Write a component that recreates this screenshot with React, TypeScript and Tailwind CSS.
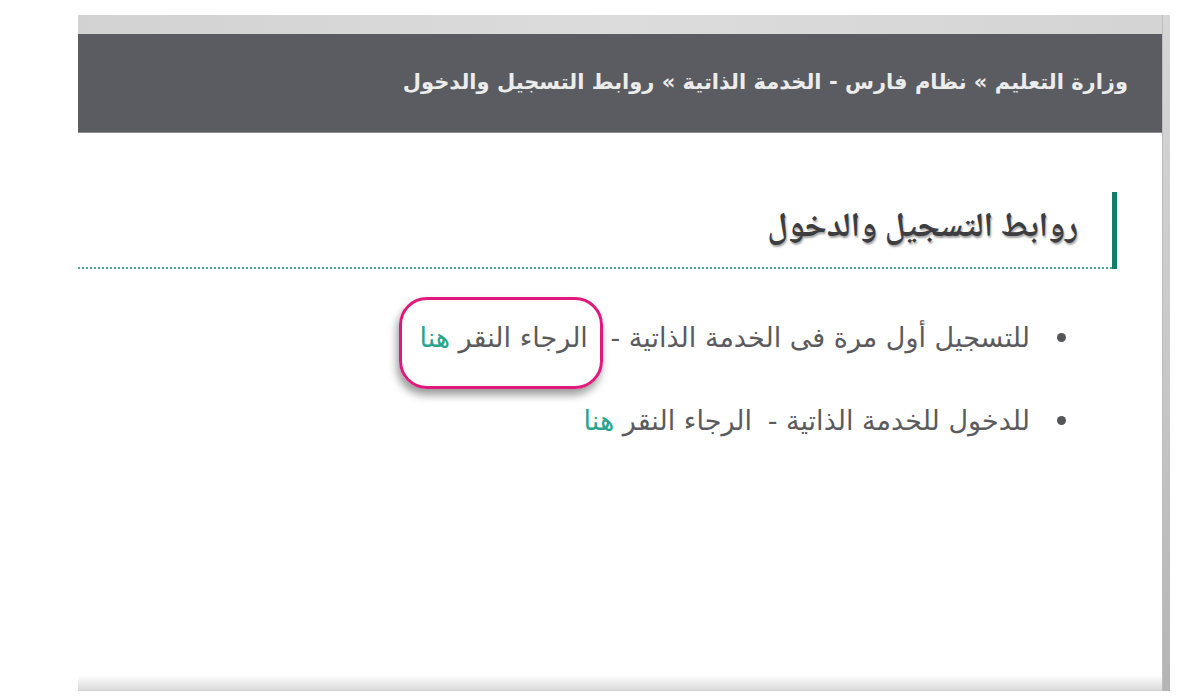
import React from "react";

const bodyFont = { fontFamily: '"DejaVu Sans", "Noto Sans", sans-serif' };

type LinkRow = { text: string; lead: string; marked?: boolean };

const rows: LinkRow[] = [
  { text: "للتسجيل أول مرة فى الخدمة الذاتية - ", lead: "الرجاء النقر ", marked: true },
  { text: "للدخول للخدمة الذاتية - ", lead: "الرجاء النقر " },
];

function Row({ row }: { row: LinkRow }) {
  const link = (
    <>
      {row.lead}
      <span className="text-[#2aa48e]">هنا</span>
    </>
  );

  return (
    <li className="flex h-[83px] items-center gap-[27px]">
      <span className="h-[9px] w-[9px] shrink-0 rounded-full bg-[#555659]" />
      <span className="whitespace-nowrap text-[27px] leading-[34px] text-[#5b5b5e]">
        {row.text}
        {row.marked ? (
          <span className="relative ms-[14px]">
            {link}
            <span className="pointer-events-none absolute -left-[20px] -right-[15px] -top-[25px] -bottom-[36px] rounded-[28px] border-[3px] border-[#e2197c] shadow-[-2px_6px_8px_rgba(0,0,0,0.4)]" />
          </span>
        ) : (
          <span className="ms-[7px]">{link}</span>
        )}
      </span>
    </li>
  );
}

export default function App() {
  return (
    <div className="h-[700px] w-[1200px] bg-white pl-[78px] pt-[15px]" style={bodyFont}>
      <div className="flex h-[676px] w-[1092px]">
        <div className="flex w-[1084px] flex-col">
          <div className="h-[19px] bg-gradient-to-r from-[#d2d2d2] via-[#dcdcdc] to-[#d4d4d4]" />
          <div
            dir="rtl"
            className="flex h-[99px] items-center border-b border-[#8e9094] bg-[#5a5c61] pr-[34px]"
          >
            <p className="whitespace-nowrap text-[21px] font-bold text-[#ececec]">
              وزارة التعليم » نظام فارس - الخدمة الذاتية » روابط التسجيل والدخول
            </p>
          </div>

          <div dir="rtl" className="flex-1 bg-white pt-[59px]">
            <div className="mr-[45px] flex">
              <div className="h-[77px] w-[5px] shrink-0 bg-[#127d69]" />
              <div className="flex h-[77px] flex-1 items-center border-b-2 border-dotted border-[#4aab98] pr-[34px]">
                <h2
                  className="text-[34px] font-bold text-[#3d3d40] [text-shadow:1px_2px_2px_rgba(0,0,0,0.35)]"
                  style={{ fontFamily: '"Noto Naskh Arabic", "Noto Sans Arabic", "DejaVu Sans", sans-serif' }}
                >
                  روابط التسجيل والدخول
                </h2>
              </div>
            </div>

            <ul className="mt-[27px] pr-[96px]">
              {rows.map((row) => (
                <Row key={row.text} row={row} />
              ))}
            </ul>
          </div>

          <div className="h-[16px] border-b border-[#cfcfcf] bg-gradient-to-b from-white to-[#dadada]" />
        </div>
        <div className="w-[8px] border-l border-[#bdbdbd] bg-gradient-to-b from-[#d6d6d6] via-[#c9c9c9] to-[#b4b4b4]" />
      </div>
    </div>
  );
}
